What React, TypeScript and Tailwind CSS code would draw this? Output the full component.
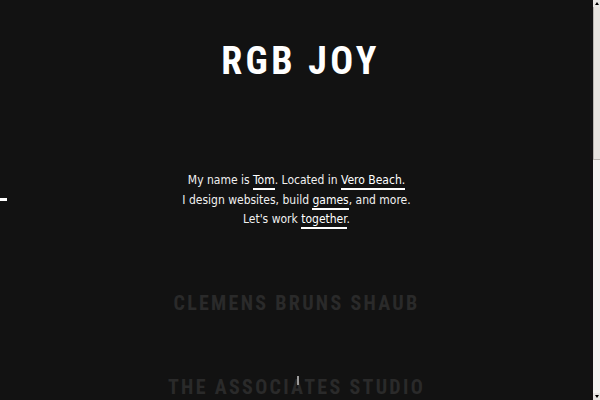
import React from "react";

const display = { fontFamily: "Roboto, 'DejaVu Sans', sans-serif" };

const Link = ({ children }: { children: React.ReactNode }) => (
  <a
    href="#"
    className="text-white no-underline border-b-2 border-white pb-[1px]"
  >
    {children}
  </a>
);

// thin classic-looking scrollbar on the right edge
const ScrollBar = () => (
  <div className="flex w-[7px] flex-col bg-[#f4f3f1]">
    <div className="flex h-[7px] items-center justify-center bg-[#e9e7e4]">
      <div className="h-0 w-0 border-x-[2px] border-b-[3px] border-x-transparent border-b-black" />
    </div>
    <div className="h-[153px] border-b border-l border-[#b9b6b2] bg-[#e6e3df]" />
    <div className="flex-1" />
    <div className="flex h-[7px] items-center justify-center bg-[#e9e7e4]">
      <div className="h-0 w-0 border-x-[2px] border-t-[3px] border-x-transparent border-t-black" />
    </div>
  </div>
);

const App: React.FC = () => {
  return (
    <div className="flex h-screen bg-[#121212]">
      <main
        className="relative flex-1 overflow-hidden text-[#f0f0f0]"
        style={{ fontFamily: '"DejaVu Sans", sans-serif', fontStretch: "condensed" }}
      >
        {/* side marker */}
        <div className="absolute left-0 top-[198px] h-[3px] w-[7px] bg-white" />

        <div className="flex flex-col items-center">
          <h1
            className="mt-[44px] pl-[8px] text-[38px] leading-[34px] font-bold tracking-[0.09em] text-white"
            style={display}
          >
            RGB JOY
          </h1>

          <div className="mt-[93px] text-center text-[12px] leading-[19.5px]">
            <p>
              My name is <Link>Tom</Link>. Located in <Link>Vero Beach.</Link>
            </p>
            <p>
              I design websites, build <Link>games</Link>, and more.
            </p>
            <p>
              Let's work <Link>together</Link>.
            </p>
          </div>

          <div
            className="mt-[62px] flex flex-col items-center gap-[62px] text-[20px] leading-[22px] font-bold tracking-[0.115em] text-[#2a2a2a]"
            style={display}
          >
            <p>CLEMENS BRUNS SHAUB</p>
            <div className="relative">
              <div className="absolute left-1/2 top-[0px] h-[9px] w-[2px] bg-[#9a9a9a]" />
              <p>THE ASSOCIATES STUDIO</p>
            </div>
            <p>ROGIE KING</p>
            <p>ZACH LIEBERMAN</p>
          </div>
        </div>
      </main>
      <ScrollBar />
    </div>
  );
};

export default App;
